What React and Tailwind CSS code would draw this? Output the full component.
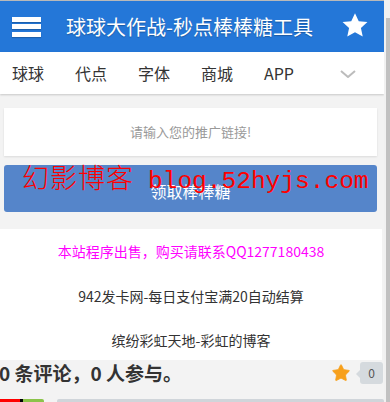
import { Star } from "lucide-react";

const navItems = ["球球", "代点", "字体", "商城", "APP"];

const links = [
  { text: "本站程序出售，购买请联系QQ1277180438", color: "text-[#ff00ff]" },
  { text: "942发卡网-每日支付宝满20自动结算", color: "text-[#333]" },
  { text: "缤纷彩虹天地-彩虹的博客", color: "text-[#333]" },
];

export default function App() {
  return (
    <div className="flex h-[402px] w-[390px] overflow-hidden bg-[#f3f3f3] font-['Noto_Sans_CJK_SC','Noto_Sans',sans-serif]">
      {/* page */}
      <div className="flex w-[384px] flex-col">
        <div className="h-px bg-[#b9b9b9]" />

        {/* Header */}
        <header className="flex h-[51px] items-center bg-[#2477d8] pl-3 pr-[14px]">
          <div className="flex w-[29px] flex-col gap-[2.5px]">
            <span className="h-[5px] bg-white shadow-[0_1px_1px_rgba(0,0,0,0.2)]" />
            <span className="h-[5px] bg-white shadow-[0_1px_1px_rgba(0,0,0,0.2)]" />
            <span className="h-[5px] bg-white shadow-[0_1px_1px_rgba(0,0,0,0.2)]" />
          </div>
          <h1 className="ml-[25px] flex-1 text-[20px] leading-none text-white [text-shadow:0_1px_1px_rgba(0,0,0,0.25)]">
            球球大作战-秒点棒棒糖工具
          </h1>
          <svg width="30" height="29" viewBox="0 0 24 24" className="mb-[2px]">
            <path
              d="M12 1.8l3.1 6.6 7.2.8-5.4 4.9 1.5 7.1L12 17.6l-6.4 3.6 1.5-7.1L1.7 9.2l7.2-.8z"
              fill="white"
            />
          </svg>
        </header>

        {/* Nav */}
        <nav className="flex h-[42px] items-center bg-white pl-3 pr-7 text-[16px] text-[#333] shadow-[0_1px_2px_rgba(0,0,0,0.18)]">
          {navItems.map((item) => (
            <span key={item} className="w-[63px] leading-none">
              {item}
            </span>
          ))}
          <svg width="16" height="8" viewBox="0 0 16 8" className="ml-auto mt-[2px]">
            <path d="M1 1l7 6 7-6" fill="none" stroke="#bcbcbc" strokeWidth="2" />
          </svg>
        </nav>

        {/* Form */}
        <div className="relative mt-[14px] flex flex-col gap-[9px] pl-1 pr-[7px]">
          <div className="flex h-[48px] items-center justify-center bg-white text-[13px] text-[#999] shadow-[0_1px_2px_rgba(0,0,0,0.1)]">
            请输入您的推广链接!
          </div>
          <button className="flex h-[47px] items-center justify-center rounded-[3px] bg-[#5585ca] pt-1 text-[16px] text-white">
            领取棒棒糖
          </button>
          <div className="pointer-events-none absolute left-[22px] top-[55px] flex items-baseline whitespace-nowrap leading-none text-[#ff0000]">
            <span className="text-[27px] font-light tracking-[1px]">幻影博客</span>
            <span className="ml-[14px] font-['Liberation_Mono',monospace] text-[24.5px]">blog.52hyjs.com</span>
          </div>
        </div>

        {/* Links */}
        <div className="mt-[17px] mr-[2px] flex h-[131px] flex-col items-center gap-[26.5px] bg-white pt-[13px] text-[14px]">
          {links.map((l) => (
            <p key={l.text} className={`leading-[18px] ${l.color}`}>
              {l.text}
            </p>
          ))}
        </div>

        {/* Comments */}
        <div className="flex h-[25px] items-center pr-[1px]">
          <span className="-ml-[1px] text-[19px] font-bold leading-none text-[#333]">
            0 条评论，0 人参与。
          </span>
          <Star size={20} className="ml-auto fill-[#f7a01b] text-[#f7a01b]" strokeWidth={1} />
          <div className="relative ml-[9px] flex h-[22px] w-[23px] items-center justify-center rounded-[3px] bg-[#d5dade] text-[12px] text-[#555]">
            <span className="absolute -left-[4px] top-[8px] h-0 w-0 border-y-[4px] border-r-[4px] border-y-transparent border-r-[#d5dade]" />
            0
          </div>
        </div>

        {/* Bottom bars */}
        <div className="mt-[14px] flex h-[3px]">
          <span className="w-[20px] bg-[#ff0000]" />
          <span className="w-[3px] bg-black" />
          <span className="w-[21px] rounded-tr-[2px] bg-[#8bc34a]" />
          <span className="ml-[13px] flex-1 rounded-t-[2px] bg-[#d0d5da]" />
        </div>
      </div>

      {/* Scrollbar */}
      <div className="flex w-[6px] flex-col bg-[#f1f1f1] pl-[2px]">
        <div className="mt-[18px] h-full bg-[#c1c1c1]" />
      </div>
    </div>
  );
}
